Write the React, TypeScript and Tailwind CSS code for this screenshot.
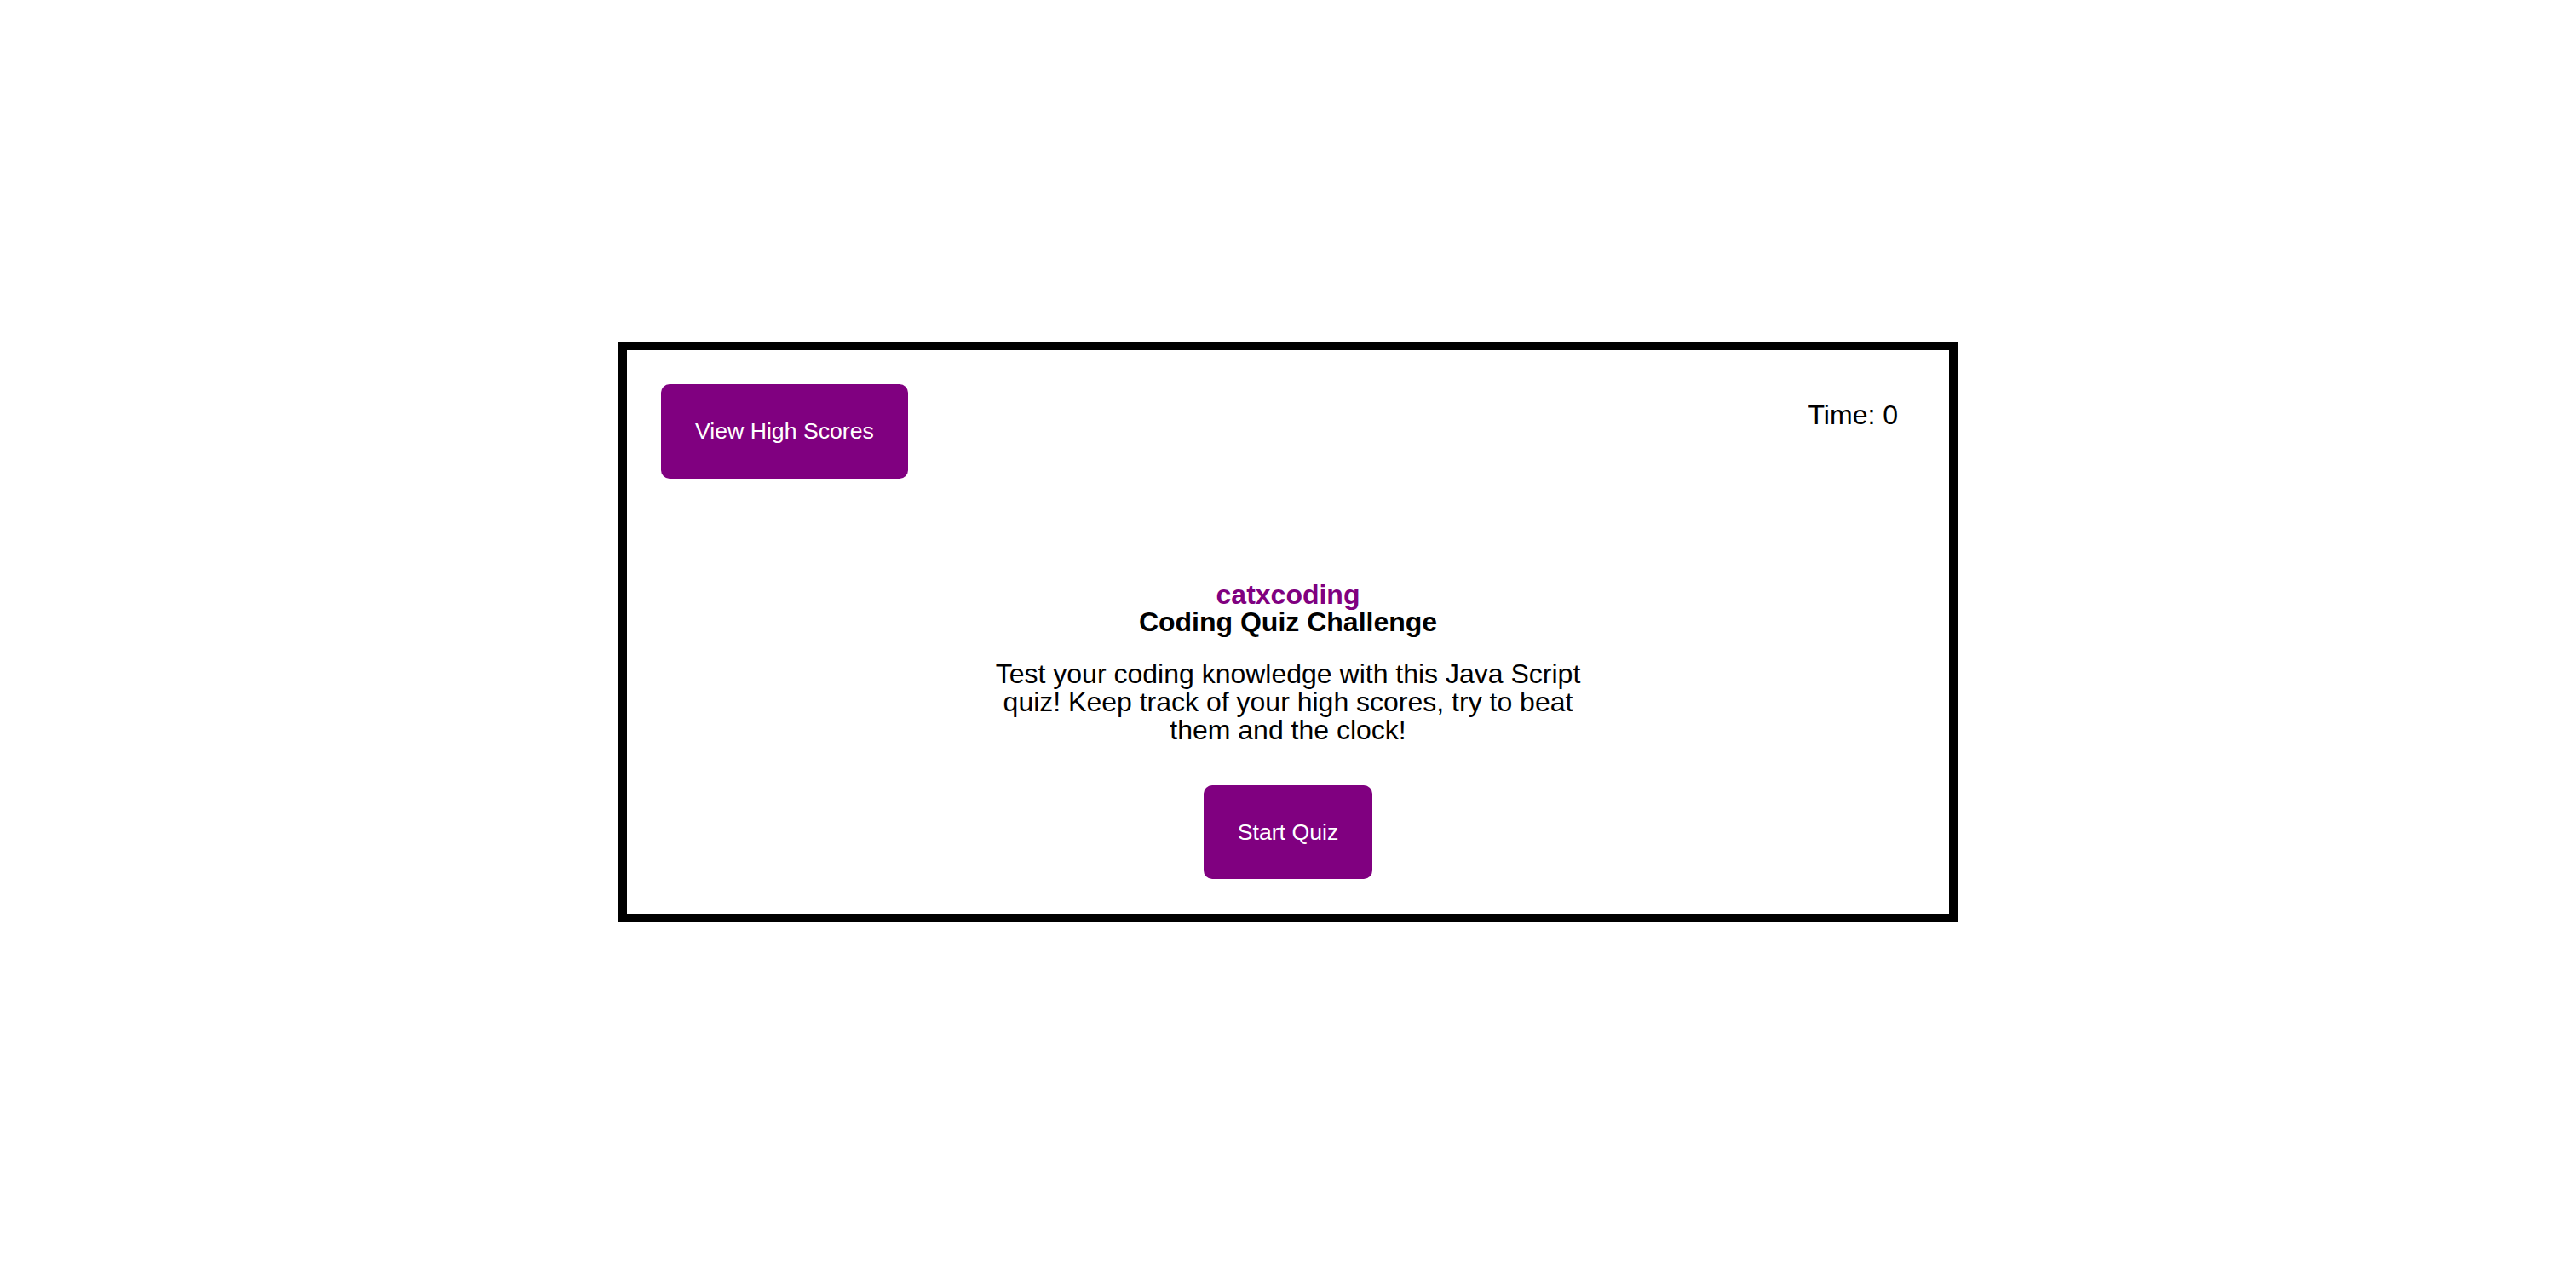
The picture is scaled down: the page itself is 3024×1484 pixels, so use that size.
export default function App() {
  return (
    <div className="flex min-h-screen items-center justify-center bg-white font-['Liberation_Sans',Arial,sans-serif] text-black">
      <div className="flex w-[1572px] flex-col border-[10px] border-black px-10 pt-10 pb-[41px]">
        <header className="flex items-start justify-between">
          <button className="rounded-[10px] bg-[#800080] px-10 py-10 text-[26.67px] leading-[31px] text-white">
            View High Scores
          </button>
          <div className="mt-5 mr-5 text-[32px] leading-[33px]">Time: 0</div>
        </header>

        <main className="mt-[120px] flex flex-col items-center text-center">
          <h1 className="text-[32px] leading-[32px] font-bold text-[#800080]">catxcoding</h1>
          <h2 className="text-[32px] leading-[32px] font-bold">Coding Quiz Challenge</h2>
          <p className="mt-[29px] w-[720px] text-[32px] leading-[33px]">
            Test your coding knowledge with this Java Script quiz! Keep track of your high scores, try to beat
            them and the clock!
          </p>
          <button className="mt-[48px] rounded-[10px] bg-[#800080] px-10 py-10 text-[26.67px] leading-[30px] text-white">
            Start Quiz
          </button>
        </main>
      </div>
    </div>
  )
}
